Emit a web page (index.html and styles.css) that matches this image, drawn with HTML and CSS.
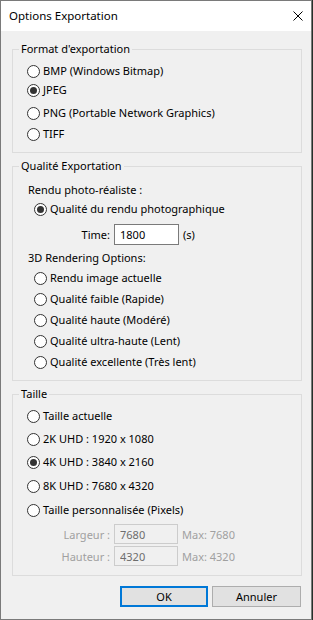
FILE: index.html
```html
<!DOCTYPE html>
<html lang="fr">
<head>
  <meta charset="UTF-8" />
  <title>Options Exportation</title>
  <link rel="stylesheet" href="styles.css">
</head>
<body>
  <div class="window">
    <!-- barre de titre -->
    <div class="titlebar">
      <span class="title">Options Exportation</span>
      <svg class="close" width="10" height="10" viewBox="0 0 10 10">
        <path d="M0.5 0.5 L9.5 9.5 M9.5 0.5 L0.5 9.5" stroke="#000" stroke-width="1" fill="none"/>
      </svg>
    </div>

    <div class="content">
      <!-- Format -->
      <fieldset class="group format">
        <legend>Format d'exportation</legend>
        <label class="opt"><input type="radio" name="fmt"> BMP (Windows Bitmap)</label>
        <label class="opt tight"><input type="radio" name="fmt" checked> JPEG</label>
        <label class="opt wide"><input type="radio" name="fmt"> PNG (Portable Network Graphics)</label>
        <label class="opt mid"><input type="radio" name="fmt"> TIFF</label>
      </fieldset>

      <!-- Qualité -->
      <fieldset class="group quality">
        <legend>Qualité Exportation</legend>
        <div class="caption first">Rendu photo-réaliste :</div>
        <label class="opt photo"><input type="radio" name="rendu" checked> Qualité du rendu photographique</label>
        <div class="field time-row">
          <span class="field-label">Time:</span>
          <input type="text" class="box" value="1800">
          <span class="unit">(s)</span>
        </div>
        <div class="caption">3D Rendering Options:</div>
        <label class="opt"><input type="radio" name="rendu"> Rendu image actuelle</label>
        <label class="opt"><input type="radio" name="rendu"> Qualité faible (Rapide)</label>
        <label class="opt"><input type="radio" name="rendu"> Qualité haute (Modéré)</label>
        <label class="opt"><input type="radio" name="rendu"> Qualité ultra-haute (Lent)</label>
        <label class="opt"><input type="radio" name="rendu"> Qualité excellente (Très lent)</label>
      </fieldset>

      <!-- Taille -->
      <fieldset class="group size">
        <legend>Taille</legend>
        <label class="opt"><input type="radio" name="taille"> Taille actuelle</label>
        <label class="opt"><input type="radio" name="taille"> 2K UHD : 1920 x 1080</label>
        <label class="opt"><input type="radio" name="taille" checked> 4K UHD : 3840 x 2160</label>
        <label class="opt loose"><input type="radio" name="taille"> 8K UHD : 7680 x 4320</label>
        <label class="opt loose"><input type="radio" name="taille"> Taille personnalisée (Pixels)</label>
        <div class="field disabled first-dim">
          <span class="field-label">Largeur :</span>
          <input type="text" class="box" value="7680" disabled>
          <span class="unit">Max: 7680</span>
        </div>
        <div class="field disabled">
          <span class="field-label">Hauteur :</span>
          <input type="text" class="box" value="4320" disabled>
          <span class="unit">Max: 4320</span>
        </div>
      </fieldset>

      <div class="buttons">
        <button class="btn default">OK</button>
        <button class="btn">Annuler</button>
      </div>
    </div>
  </div>
</body>
</html>
```

FILE: styles.css
```css
:root {
  --face:      #f0f0f0;
  --line:      #dcdcdc;
  --text:      #000;
  --dim:       #a0a0a0;
  --accent:    #0078d7;
  --btn-bg:    #e1e1e1;
  --btn-line:  #adadad;
}

* { box-sizing: border-box; margin: 0; padding: 0; }

html, body {
  height: 100%;
  font-family: "Noto Sans", "Open Sans", sans-serif;
  font-size: 11px;
  color: var(--text);
}

body {
  background: #26302a;
}

.window {
  width: 312px;
  height: 620px;
  background: var(--face);
  border: 1px solid #7a7a7a;
  display: flex;
  flex-direction: column;
}

/* === BARRE DE TITRE === */
.titlebar {
  height: 30px;
  background: #fff;
  display: flex;
  align-items: center;
  justify-content: space-between;
  padding: 0 8px 0 8px;
  flex-shrink: 0;
}
.titlebar .title {
  font-size: 11.5px;
  line-height: 16px;
}

/* === CONTENU === */
.content {
  padding-top: 10px;
}

.group {
  margin: 0 9px 0 11px;
  border: 1px solid var(--line);
  padding: 0 0 9px 0;
  min-width: 0;
}
.group + .group {
  margin-top: 5px;
}
.group legend {
  margin-left: 6px;
  padding: 0 2px;
  line-height: 16px;
}

.opt {
  display: flex;
  align-items: center;
  height: 18px;
  line-height: 16px;
  white-space: nowrap;
}
.opt input {
  appearance: none;
  -webkit-appearance: none;
  width: 13px;
  height: 13px;
  border: 1px solid #333;
  border-radius: 50%;
  background: #fff;
  margin-right: 3px;
  position: relative;
  flex-shrink: 0;
}
.opt input:checked::after {
  content: "";
  position: absolute;
  left: 2px;
  top: 2px;
  width: 7px;
  height: 7px;
  border-radius: 50%;
  background: #333;
}

/* Format */
.format .opt { padding-left: 14px; }
.format .opt:first-of-type { margin-top: 5px; }
.format .opt.tight { margin-top: 1px; }
.format .opt.wide  { margin-top: 5px; }
.format .opt.mid   { margin-top: 3px; }

/* Qualité */
.caption {
  padding-left: 15px;
  line-height: 16px;
  margin-top: 5px;
}
.caption.first { margin-top: 8px; }

.quality .opt {
  padding-left: 21px;
  margin-top: 3px;
}
.quality .opt.photo { margin-top: 2px; }

.field {
  display: flex;
  align-items: center;
}
.field-label {
  width: 97px;
  text-align: right;
  margin-right: 4px;
}
.field .box {
  width: 65px;
  height: 21px;
  border: 1px solid #7a7a7a;
  background: #fff;
  font: inherit;
  padding-left: 5px;
  color: var(--text);
}
.field .unit { margin-left: 4px; }
.time-row { margin-top: 6px; }

/* Taille */
.size .opt {
  padding-left: 14px;
  margin-top: 5px;
}
.size .opt.loose { margin-top: 6px; }

.field.disabled { color: var(--dim); margin-top: 2px; }
.field.disabled .box {
  width: 64px;
  height: 20px;
  border-color: #cccccc;
  background: var(--face);
  color: #6d6d6d;
}
.field.first-dim { margin-top: 5px; }

/* === BOUTONS === */
.buttons {
  display: flex;
  justify-content: flex-end;
  gap: 4px;
  padding-right: 10px;
  margin-top: 10px;
}
.btn {
  height: 21px;
  background: var(--btn-bg);
  border: 1px solid var(--btn-line);
  font: inherit;
  color: var(--text);
  width: 89px;
}
.btn.default {
  width: 88px;
  border: 2px solid var(--accent);
}
```
